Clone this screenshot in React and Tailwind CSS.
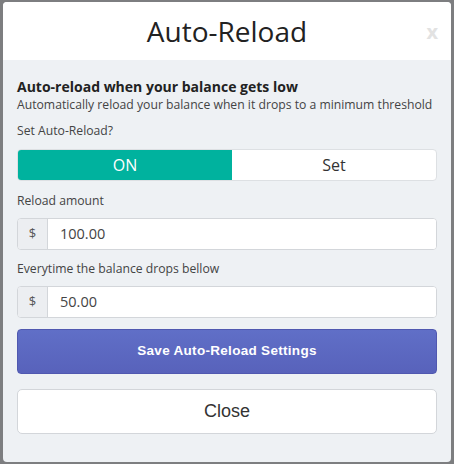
import React, { useState } from 'react';

const MoneyInput = ({ value }) => (
    <div className="flex h-[32px] rounded-[4px] border border-[#d3d6da] bg-white overflow-hidden">
        <span className="w-[30px] flex items-center justify-center bg-[#eceef1] border-r border-[#d3d6da] text-[13px] text-[#555]">$</span>
        <input
            className="flex-1 px-[12px] text-[14.5px] text-[#444] outline-none bg-white"
            defaultValue={value}
        />
    </div>
);

const App = () => {
    const [on, setOn] = useState(true);

    return (
        <div className="w-[454px] h-[464px] bg-[#7d7e80] pt-[2px] px-[3px] pb-[2px]" style={{ fontFamily: '"Open Sans", sans-serif' }}>
            <div className="h-full rounded-[4px] overflow-hidden bg-[#eef1f4] flex flex-col">
                {/* Header */}
                <div className="relative h-[58px] bg-white flex items-center justify-center">
                    <h2 className="text-[28px] text-[#222] leading-none">Auto-Reload</h2>
                    <span className="absolute right-[13px] top-[20px] text-[20px] font-bold text-[#e2e2e2] leading-none">x</span>
                </div>

                {/* Body */}
                <div className="px-[14px] pt-[18px] flex flex-col">
                    <h3 className="text-[14px] font-bold text-[#222] leading-[18px]">Auto-reload when your balance gets low</h3>
                    <p className="text-[12.2px] text-[#444] leading-[18px] whitespace-nowrap">Automatically reload your balance when it drops to a minimum threshold</p>

                    <p className="mt-[8px] text-[12.2px] text-[#444] leading-[18px]">Set Auto-Reload?</p>
                    <div className="mt-[9px] flex h-[32px] rounded-[4px] border border-[#dde0e3] bg-white overflow-hidden">
                        <button
                            onClick={() => setOn(true)}
                            className={`w-[214px] text-[16px] ${on ? 'bg-[#00b29e] text-white' : 'text-[#333]'}`}
                        >
                            ON
                        </button>
                        <button
                            onClick={() => setOn(false)}
                            className={`flex-1 text-[16px] ${!on ? 'bg-[#00b29e] text-white' : 'text-[#333]'}`}
                        >
                            Set
                        </button>
                    </div>

                    <p className="mt-[11px] text-[12.2px] text-[#444] leading-[18px]">Reload amount</p>
                    <div className="mt-[8px]">
                        <MoneyInput value="100.00" />
                    </div>

                    <p className="mt-[10px] text-[12.2px] text-[#444] leading-[18px]">Everytime the balance drops bellow</p>
                    <div className="mt-[8px]">
                        <MoneyInput value="50.00" />
                    </div>

                    <button
                        className="mt-[11px] h-[45px] rounded-[4px] border border-[#5058b0] bg-gradient-to-b from-[#606fc7] to-[#5862bb] text-white text-[13.5px] font-bold tracking-[0.3px]"
                        style={{ fontFamily: '"Liberation Sans", Arial, sans-serif' }}
                    >
                        Save Auto-Reload Settings
                    </button>
                    <button
                        className="mt-[15px] h-[45px] rounded-[5px] border border-[#d3d6da] bg-white text-[#333] text-[18px]"
                        style={{ fontFamily: '"Liberation Sans", Arial, sans-serif' }}
                    >
                        Close
                    </button>
                </div>
            </div>
        </div>
    );
};

export default App;
